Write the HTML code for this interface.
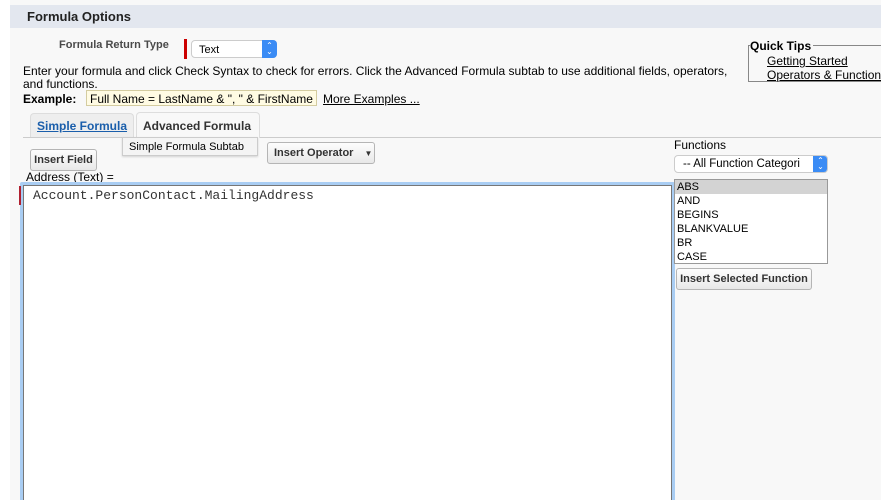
<!DOCTYPE html>
<html style="width:881px;height:500px;overflow:hidden"><head><style>
*{margin:0;padding:0;box-sizing:border-box}
body{width:881px;height:500px;overflow:hidden;background:#fff;font-family:"Liberation Sans",Arial,sans-serif;font-size:12px;color:#000;position:relative}
.abs{position:absolute}
.panel{left:10px;top:0;width:871px;height:500px;background:#f8f8f8}
.hdr{left:10px;top:5px;width:871px;height:23px;background:#e3e7ef}
.btn{position:absolute;background:linear-gradient(#fdfdfd,#e8e8e8);border:1px solid #b5b5b5;border-radius:3px;font-weight:bold;font-size:11px;color:#333;text-align:center}
.sel{position:absolute;background:#fff;border:1px solid #ccc;border-radius:4px;font-size:11px}
.sel .ar{position:absolute;right:-1px;top:-1px;bottom:-1px;width:15px;background:#3b8cf5;border-radius:0 4px 4px 0;color:#fff;font-size:8px;line-height:6px;text-align:center;padding-top:3px}
a{color:#000}
</style></head><body>
<div class="abs panel"></div>
<div class="abs hdr"></div>
<div class="abs" style="left:27px;top:9px;font-weight:bold;font-size:13px;color:#222">Formula Options</div>
<div class="abs" style="left:59px;top:39px;font-weight:bold;font-size:11px;color:#4a4a4a">Formula Return Type</div>
<div class="abs" style="left:184px;top:39px;width:3px;height:20px;background:#c00"></div>
<div class="sel" style="left:191px;top:40px;width:86px;height:18px;padding:3px 0 0 7px">Text<div class="ar">⌃<br>⌄</div></div>
<div class="abs" style="left:23px;top:65px;width:720px;font-size:12px;line-height:13px">Enter your formula and click Check Syntax to check for errors. Click the Advanced Formula subtab to use additional fields, operators, and functions.</div>
<div class="abs" style="left:23px;top:92px;font-weight:bold">Example:</div>
<div class="abs" style="left:86px;top:90px;width:231px;height:16px;background:#fffbe3;border:1px solid #d4cca0;padding:1px 3px;white-space:nowrap">Full Name = LastName &amp; ", " &amp; FirstName</div>
<div class="abs" style="left:323px;top:92px;text-decoration:underline">More Examples ...</div>
<div class="abs" style="left:748px;top:45px;width:133px;height:37px;border-left:1px solid #888;border-top:1px solid #888;border-bottom:1px solid #888"></div>
<div class="abs" style="left:750px;top:39px;font-weight:bold;font-size:12px;background:#f8f8f8;padding-right:2px">Quick Tips</div>
<div class="abs" style="left:767px;top:54px;text-decoration:underline">Getting Started</div>
<div class="abs" style="left:767px;top:68px;text-decoration:underline;white-space:nowrap">Operators &amp; Functions</div>
<div class="abs" style="left:23px;top:137px;width:858px;height:1px;background:#ccc"></div>
<div class="abs" style="left:30px;top:113px;width:104px;height:24px;background:#eee;border:1px solid #ddd;border-bottom:none;border-radius:4px 4px 0 0"></div>
<div class="abs" style="left:37px;top:119px;font-weight:bold;color:#1a5eab;text-decoration:underline">Simple Formula</div>
<div class="abs" style="left:136px;top:112px;width:124px;height:26px;background:#f8f8f8;border:1px solid #ddd;border-bottom:none;border-radius:4px 4px 0 0"></div>
<div class="abs" style="left:143px;top:119px;font-weight:bold;color:#333">Advanced Formula</div>
<div class="abs" style="left:122px;top:137px;width:136px;height:19px;background:#f4f4f4;border:1px solid #ccc;font-size:11px;padding:3px 0 0 6px;box-shadow:0 1px 2px rgba(0,0,0,.15)">Simple Formula Subtab</div>
<div class="btn" style="left:30px;top:149px;width:67px;height:22px;line-height:20px">Insert Field</div>
<div class="btn" style="left:267px;top:142px;width:108px;height:22px;line-height:21px;text-align:left;padding-left:6px">Insert Operator <span style="font-size:8px;margin-left:8px">▼</span></div>
<div class="abs" style="left:26px;top:170px">Address (Text) =</div>
<div class="abs" style="left:20px;top:182px;width:655px;height:330px;border:3px solid #a9cdf3;border-radius:2px"></div>
<div class="abs" style="left:23px;top:185px;width:649px;height:330px;background:#fff;border:1px solid #777"></div>
<div class="abs" style="left:19px;top:186px;width:2px;height:19px;background:#b02030"></div>
<div class="abs" style="left:33px;top:188px;font-family:'Liberation Mono',monospace;font-size:13px;color:#333">Account.PersonContact.MailingAddress</div>
<div class="abs" style="left:674px;top:138px;font-size:12px">Functions</div>
<div class="sel" style="left:674px;top:155px;width:154px;height:18px;padding:2px 0 0 8px;white-space:nowrap;overflow:hidden;font-size:11.5px">-- All Function Categori<div class="ar">⌃<br>⌄</div></div>
<div class="abs" style="left:674px;top:179px;width:154px;height:85px;background:#fff;border:1px solid #999;font-size:11px;line-height:14px">
<div style="background:#d3d3d3;padding-left:2px">ABS</div><div style="padding-left:2px">AND</div><div style="padding-left:2px">BEGINS</div><div style="padding-left:2px">BLANKVALUE</div><div style="padding-left:2px">BR</div><div style="padding-left:2px">CASE</div></div>
<div class="btn" style="left:676px;top:268px;width:136px;height:22px;line-height:21px">Insert Selected Function</div>
</body></html>
